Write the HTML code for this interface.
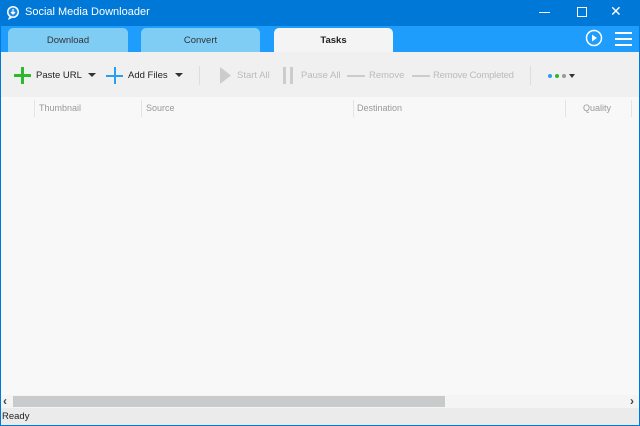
<!DOCTYPE html><html><head><style>
*{margin:0;padding:0;box-sizing:border-box}
body{width:640px;height:426px;overflow:hidden;font-family:"Liberation Sans",sans-serif;background:#0078d7;position:relative}
.a{position:absolute}
.t{font-size:9.5px;white-space:nowrap}
</style></head><body>
<div class="a" style="left:0;top:0;width:640px;height:26px;background:#0078d7"></div>
<svg class="a" style="left:6px;top:5px" width="14" height="16"><circle cx="7" cy="7" r="6" fill="#fff"/><path d="M3 12 L2 15 L6 13Z" fill="#fff"/><circle cx="7" cy="7" r="4.5" fill="#1e88e5"/><path d="M7 4v5M5 7l2 2 2-2" stroke="#fff" stroke-width="1.3" fill="none"/></svg>
<div class="a" style="left:25px;top:6px;color:#fff;font-size:11px">Social Media Downloader</div>
<div class="a" style="left:539px;top:12px;width:11px;height:1px;background:#fff"></div>
<div class="a" style="left:577px;top:7px;width:10px;height:10px;border:1px solid #fff"></div>
<div class="a" style="left:610px;top:3px;color:#fff;font-size:14px">✕</div>
<div class="a" style="left:1px;top:26px;width:638px;height:26px;background:#1e9dfc"></div>
<div class="a t" style="left:8px;top:28px;width:120px;height:24px;background:#7fcdf5;border-radius:5px 5px 0 0;text-align:center;line-height:25px;color:#333">Download</div>
<div class="a t" style="left:141px;top:28px;width:119px;height:24px;background:#7fcdf5;border-radius:5px 5px 0 0;text-align:center;line-height:25px;color:#333">Convert</div>
<div class="a t" style="left:274px;top:28px;width:119px;height:24px;background:#f4f4f4;border-radius:5px 5px 0 0;text-align:center;line-height:25px;color:#222;font-weight:bold">Tasks</div>
<svg class="a" style="left:584px;top:29px" width="20" height="20"><circle cx="10" cy="9" r="7.5" stroke="#fff" stroke-width="1.5" fill="none"/><path d="M8 5.5v7l5-3.5z" fill="#fff"/></svg>
<div class="a" style="left:615px;top:32px;width:17px;height:2px;background:#fff;box-shadow:0 6px #fff,0 12px #fff"></div>
<div class="a" style="left:1px;top:52px;width:638px;height:45px;background:#f0f0f0"></div>
<div class="a" style="left:14px;top:74px;width:17px;height:3px;background:#2db92d"></div><div class="a" style="left:21px;top:67px;width:3px;height:17px;background:#2db92d"></div>
<div class="a t" style="left:36px;top:70px;color:#222">Paste URL</div>
<div class="a" style="left:88px;top:73px;border:4px solid transparent;border-top:4px solid #333"></div>
<div class="a" style="left:106px;top:75px;width:17px;height:2px;background:#2a9df4"></div><div class="a" style="left:114px;top:67px;width:2px;height:17px;background:#2a9df4"></div>
<div class="a t" style="left:128px;top:70px;color:#222">Add Files</div>
<div class="a" style="left:175px;top:73px;border:4px solid transparent;border-top:4px solid #333"></div>
<div class="a" style="left:199px;top:66px;width:1px;height:19px;background:#ddd"></div>
<svg class="a" style="left:220px;top:67px" width="12" height="17"><path d="M0 0v17l11-8.5z" fill="#ccc"/></svg>
<div class="a t" style="left:237px;top:70px;color:#bbb">Start All</div>
<div class="a" style="left:283px;top:67px;width:3px;height:17px;background:#ccc"></div><div class="a" style="left:290px;top:67px;width:3px;height:17px;background:#ccc"></div>
<div class="a t" style="left:301px;top:70px;color:#bbb">Pause All</div>
<div class="a" style="left:347px;top:75px;width:18px;height:2px;background:#ccc"></div>
<div class="a t" style="left:369px;top:70px;color:#bbb">Remove</div>
<div class="a" style="left:412px;top:75px;width:18px;height:2px;background:#ccc"></div>
<div class="a t" style="left:433px;top:70px;color:#bbb;letter-spacing:-0.2px">Remove Completed</div>
<div class="a" style="left:530px;top:66px;width:1px;height:19px;background:#ddd"></div>
<div class="a" style="left:548px;top:74px;width:4px;height:4px;border-radius:2px;background:#2a9df4"></div>
<div class="a" style="left:555px;top:74px;width:4px;height:4px;border-radius:2px;background:#2db92d"></div>
<div class="a" style="left:562px;top:74px;width:4px;height:4px;border-radius:2px;background:#999"></div>
<div class="a" style="left:569px;top:74px;border:3px solid transparent;border-top:4px solid #333"></div>
<div class="a" style="left:1px;top:97px;width:638px;height:298px;background:#f8f8f8"></div>
<div class="a" style="left:34px;top:100px;width:1px;height:17px;background:#e4e4e4"></div>
<div class="a" style="left:141px;top:100px;width:1px;height:17px;background:#e4e4e4"></div>
<div class="a" style="left:353px;top:100px;width:1px;height:17px;background:#e4e4e4"></div>
<div class="a" style="left:565px;top:100px;width:1px;height:17px;background:#e4e4e4"></div>
<div class="a" style="left:631px;top:100px;width:1px;height:17px;background:#e4e4e4"></div>
<div class="a t" style="left:39px;top:103px;color:#999;font-size:9px">Thumbnail</div>
<div class="a t" style="left:146px;top:103px;color:#999;font-size:9px">Source</div>
<div class="a t" style="left:357px;top:103px;color:#999;font-size:9px">Destination</div>
<div class="a t" style="left:583px;top:103px;color:#999;font-size:9px">Quality</div>
<div class="a" style="left:1px;top:395px;width:638px;height:13px;background:#f4f4f4"></div>
<div class="a" style="left:13px;top:396px;width:432px;height:11px;background:#c8cacb"></div>
<div class="a" style="left:3px;top:394px;color:#444;font-size:12px;font-weight:bold">‹</div>
<div class="a" style="left:630px;top:394px;color:#444;font-size:12px;font-weight:bold">›</div>
<div class="a" style="left:1px;top:408px;width:638px;height:17px;background:#ebebeb"></div>
<div class="a t" style="left:2px;top:411px;color:#222">Ready</div>
</body></html>
